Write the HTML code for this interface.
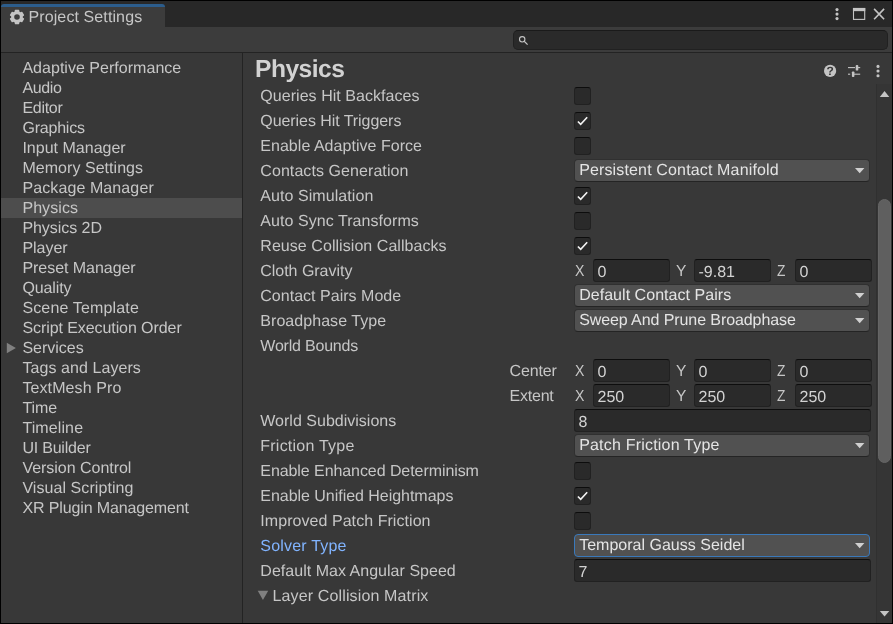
<!DOCTYPE html>
<html><head><meta charset="utf-8"><title>Project Settings</title>
<style>
html,body{margin:0;padding:0;background:#000;}
body{width:893px;height:624px;overflow:hidden;position:relative;font-family:"Liberation Sans",sans-serif;text-rendering:geometricPrecision;}
#win{position:absolute;left:1px;top:1px;width:891px;height:622px;background:#383838;overflow:hidden;}
#root{position:absolute;left:0;top:0;width:893px;height:624px;will-change:transform;}
#root>*{position:absolute;}
.tabbar{left:1px;top:1px;width:891px;height:26px;background:#282828;}
.tab{left:1px;top:4px;width:164px;height:23px;background:#3c3c3c;border-top:3px solid #2c5d8c;border-radius:3px 3px 0 0;box-sizing:border-box;}
.toolbar{left:1px;top:27px;width:891px;height:25px;background:#3c3c3c;}
.hline{left:1px;top:52px;width:891px;height:1px;background:#232323;}
.vline{left:242px;top:53px;width:1px;height:570px;background:#232323;}
.sel{left:1px;top:198px;width:241px;height:20px;background:#4d4d4d;}
.search{left:513px;top:30px;width:375px;height:20px;box-sizing:border-box;background:#2a2a2a;border:1px solid #212121;border-top-color:#1a1a1a;border-radius:5px;}
.t{font-size:16.0px;line-height:20px;height:20px;color:#c6c6c6;white-space:pre;}
.fv{color:#d2d2d2;}
.title{font-size:24.6px;font-weight:bold;line-height:20px;height:20px;color:#d2d2d2;white-space:pre;}
.blue{color:#81b4ff;}
.ddt{color:#e4e4e4;}

.cb{width:17px;height:18px;box-sizing:border-box;background:#2a2a2a;border:1px solid #212121;border-top-color:#0d0d0d;border-radius:3px;}
.dd{width:296px;height:23px;box-sizing:border-box;background:#515151;border:1px solid #303030;border-bottom-color:#242424;border-radius:4px;}
.dd.foc{border-color:#3a79bb;}
.tf{height:23px;box-sizing:border-box;background:#2a2a2a;border:1px solid #212121;border-top-color:#0d0d0d;border-radius:3px;}
.sbtrack{left:876px;top:84px;width:16px;height:539px;background:#353535;border-left:1px solid #303030;box-sizing:border-box;}
.sbthumb{left:878px;top:198.5px;width:13px;height:264.5px;background:#5f5f5f;border-radius:6.5px;box-sizing:border-box;border:1px solid #656565;}
</style></head><body>
<div id="win"></div>
<div id="root">
<div class="tabbar"></div>
<div class="tab"></div>
<div class="toolbar"></div>
<div class="hline"></div>
<div class="vline"></div>
<div class="sel"></div>
<div class="search"></div>
<div class="sbtrack"></div>
<div class="sbthumb"></div>
<svg style="left:878px;top:89px" width="14" height="10" viewBox="0 0 14 10"><path d="M1.8 8.1 L11.3 8.1 L6.55 2 Z" fill="#c4c4c4"/></svg>
<svg style="left:878px;top:609px" width="14" height="10" viewBox="0 0 14 10"><path d="M1.8 2 L11.3 2 L6.55 7.6 Z" fill="#c4c4c4"/></svg>
<svg style="left:4px;top:340px" width="16" height="16" viewBox="0 0 16 16"><path d="M2.8 2.8 L2.8 13.2 L11.9 8 Z" fill="#808080"/></svg>
<div class="cb" style="left:574px;top:87px"></div>
<div class="cb" style="left:574px;top:112px"></div>
<svg class="ck" style="left:574px;top:112px" width="18" height="18" viewBox="0 0 18 18"><path d="M3.9 9.5 L6.7 12.4 L13.2 5.3" fill="none" stroke="#f2f2f2" stroke-width="1.65"/></svg>
<div class="cb" style="left:574px;top:137px"></div>
<div class="dd" style="left:574px;top:159px"></div>
<svg style="left:853px;top:166px" width="14" height="10" viewBox="0 0 14 10"><path d="M2 2.1 L11.4 2.1 L6.7 7.3 Z" fill="#d0d0d0"/></svg>
<div class="cb" style="left:574px;top:187px"></div>
<svg class="ck" style="left:574px;top:187px" width="18" height="18" viewBox="0 0 18 18"><path d="M3.9 9.5 L6.7 12.4 L13.2 5.3" fill="none" stroke="#f2f2f2" stroke-width="1.65"/></svg>
<div class="cb" style="left:574px;top:212px"></div>
<div class="cb" style="left:574px;top:237px"></div>
<svg class="ck" style="left:574px;top:237px" width="18" height="18" viewBox="0 0 18 18"><path d="M3.9 9.5 L6.7 12.4 L13.2 5.3" fill="none" stroke="#f2f2f2" stroke-width="1.65"/></svg>
<div class="tf" style="left:593px;top:259px;width:77px"></div>
<div class="tf" style="left:694px;top:259px;width:77px"></div>
<div class="tf" style="left:795px;top:259px;width:77px"></div>
<div class="dd" style="left:574px;top:284px"></div>
<svg style="left:853px;top:291px" width="14" height="10" viewBox="0 0 14 10"><path d="M2 2.1 L11.4 2.1 L6.7 7.3 Z" fill="#d0d0d0"/></svg>
<div class="dd" style="left:574px;top:309px"></div>
<svg style="left:853px;top:316px" width="14" height="10" viewBox="0 0 14 10"><path d="M2 2.1 L11.4 2.1 L6.7 7.3 Z" fill="#d0d0d0"/></svg>
<div class="tf" style="left:593px;top:359px;width:77px"></div>
<div class="tf" style="left:694px;top:359px;width:77px"></div>
<div class="tf" style="left:795px;top:359px;width:77px"></div>
<div class="tf" style="left:593px;top:384px;width:77px"></div>
<div class="tf" style="left:694px;top:384px;width:77px"></div>
<div class="tf" style="left:795px;top:384px;width:77px"></div>
<div class="tf" style="left:574px;top:409px;width:297px"></div>
<div class="dd" style="left:574px;top:434px"></div>
<svg style="left:853px;top:441px" width="14" height="10" viewBox="0 0 14 10"><path d="M2 2.1 L11.4 2.1 L6.7 7.3 Z" fill="#d0d0d0"/></svg>
<div class="cb" style="left:574px;top:462px"></div>
<div class="cb" style="left:574px;top:487px"></div>
<svg class="ck" style="left:574px;top:487px" width="18" height="18" viewBox="0 0 18 18"><path d="M3.9 9.5 L6.7 12.4 L13.2 5.3" fill="none" stroke="#f2f2f2" stroke-width="1.65"/></svg>
<div class="cb" style="left:574px;top:512px"></div>
<div class="dd foc" style="left:574px;top:534px"></div>
<svg style="left:853px;top:541px" width="14" height="10" viewBox="0 0 14 10"><path d="M2 2.1 L11.4 2.1 L6.7 7.3 Z" fill="#d0d0d0"/></svg>
<div class="tf" style="left:574px;top:559px;width:297px"></div>
<svg style="left:255px;top:588px" width="16" height="16" viewBox="0 0 16 16"><path d="M2.7 2.8 L13.2 2.8 L7.95 11.9 Z" fill="#808080"/></svg>
<svg style="left:7.899999999999999px;top:8.0px" width="18" height="18" viewBox="-9 -9 18 18"><g fill="#c4c4c4"><rect x="-2.25" y="-7.15" width="4.5" height="2.75" rx="0.6" transform="rotate(0)"/><rect x="-2.25" y="-7.15" width="4.5" height="2.75" rx="0.6" transform="rotate(60)"/><rect x="-2.25" y="-7.15" width="4.5" height="2.75" rx="0.6" transform="rotate(120)"/><rect x="-2.25" y="-7.15" width="4.5" height="2.75" rx="0.6" transform="rotate(180)"/><rect x="-2.25" y="-7.15" width="4.5" height="2.75" rx="0.6" transform="rotate(240)"/><rect x="-2.25" y="-7.15" width="4.5" height="2.75" rx="0.6" transform="rotate(300)"/><path fill-rule="evenodd" d="M-5.9 0 A5.9 5.9 0 1 0 5.9 0 A5.9 5.9 0 1 0 -5.9 0 Z M-2.8 0 A2.8 2.8 0 1 1 2.8 0 A2.8 2.8 0 1 1 -2.8 0 Z"/></g></svg>
<svg style="left:830px;top:5px" width="14" height="18" viewBox="0 0 14 18"><g fill="#c4c4c4"><circle cx="7" cy="4.6" r="1.55"/><circle cx="7" cy="9.1" r="1.55"/><circle cx="7" cy="13.6" r="1.55"/></g></svg>
<svg style="left:852px;top:7px" width="14" height="14" viewBox="0 0 14 14"><rect x="1.5" y="1.5" width="11.2" height="10.9" fill="none" stroke="#c4c4c4" stroke-width="1.1"/><rect x="0.95" y="0.95" width="12.3" height="3.2" fill="#c4c4c4"/></svg>
<svg style="left:872px;top:7px" width="14" height="14" viewBox="0 0 14 14"><path d="M2.1 1.9 L12.1 12.3 M12.1 1.9 L2.1 12.3" stroke="#c4c4c4" stroke-width="1.6" fill="none"/></svg>
<svg style="left:516px;top:33px" width="14" height="14" viewBox="0 0 14 14"><circle cx="6.2" cy="6.3" r="2.7" fill="none" stroke="#c4c4c4" stroke-width="1.1"/><path d="M8.2 8.3 L11.6 11.6" stroke="#c4c4c4" stroke-width="1.2" fill="none"/></svg>
<svg style="left:823px;top:64px" width="14" height="14" viewBox="0 0 14 14"><circle cx="7.1" cy="6.9" r="6.1" fill="#c4c4c4"/><text x="7.1" y="11.2" font-family="Liberation Sans" font-weight="bold" font-size="12" text-anchor="middle" fill="#383838">?</text></svg>
<svg style="left:847px;top:64px" width="14" height="14" viewBox="0 0 14 14"><g fill="#c4c4c4"><rect x="1" y="3.05" width="7" height="1.1"/><rect x="8.7" y="1" width="2.6" height="5.6" rx="0.9"/><rect x="11" y="3.05" width="2.2" height="1.1"/><rect x="1" y="9.65" width="2.2" height="1.1"/><rect x="4.9" y="7.5" width="2.5" height="5.5" rx="0.8"/><rect x="7" y="9.65" width="6.2" height="1.1"/></g></svg>
<svg style="left:871px;top:62px" width="14" height="18" viewBox="0 0 14 18"><g fill="#c4c4c4"><circle cx="7" cy="4.4" r="1.55"/><circle cx="7" cy="9.05" r="1.55"/><circle cx="7" cy="13.7" r="1.55"/></g></svg>
<span id="x0" class="t" style="left:22.40px;top:59px;letter-spacing:0.030px;">Adaptive Performance</span>
<span id="x1" class="t" style="left:22.40px;top:79px;letter-spacing:-0.336px;">Audio</span>
<span id="x2" class="t" style="left:22.40px;top:99px;letter-spacing:-0.284px;">Editor</span>
<span id="x3" class="t" style="left:22.40px;top:119px;letter-spacing:-0.205px;">Graphics</span>
<span id="x4" class="t" style="left:22.40px;top:139px;letter-spacing:0.010px;">Input Manager</span>
<span id="x5" class="t" style="left:22.40px;top:159px;letter-spacing:0.044px;">Memory Settings</span>
<span id="x6" class="t" style="left:22.40px;top:179px;letter-spacing:0.104px;">Package Manager</span>
<span id="x7" class="t" style="left:22.40px;top:199px;letter-spacing:0.078px;">Physics</span>
<span id="x8" class="t" style="left:22.40px;top:219px;letter-spacing:-0.051px;">Physics 2D</span>
<span id="x9" class="t" style="left:22.40px;top:239px;letter-spacing:-0.010px;">Player</span>
<span id="x10" class="t" style="left:22.40px;top:259px;letter-spacing:-0.041px;">Preset Manager</span>
<span id="x11" class="t" style="left:22.40px;top:279px;letter-spacing:-0.121px;">Quality</span>
<span id="x12" class="t" style="left:22.40px;top:299px;letter-spacing:0.153px;">Scene Template</span>
<span id="x13" class="t" style="left:22.40px;top:319px;letter-spacing:-0.078px;">Script Execution Order</span>
<span id="x14" class="t" style="left:22.40px;top:339px;letter-spacing:0.000px;">Services</span>
<span id="x15" class="t" style="left:22.40px;top:359px;letter-spacing:0.074px;">Tags and Layers</span>
<span id="x16" class="t" style="left:22.40px;top:379px;letter-spacing:0.107px;">TextMesh Pro</span>
<span id="x17" class="t" style="left:22.40px;top:399px;letter-spacing:-0.029px;">Time</span>
<span id="x18" class="t" style="left:22.40px;top:419px;letter-spacing:0.110px;">Timeline</span>
<span id="x19" class="t" style="left:22.40px;top:439px;letter-spacing:-0.215px;">UI Builder</span>
<span id="x20" class="t" style="left:22.40px;top:459px;letter-spacing:-0.027px;">Version Control</span>
<span id="x21" class="t" style="left:22.40px;top:479px;letter-spacing:0.070px;">Visual Scripting</span>
<span id="x22" class="t" style="left:22.40px;top:499px;letter-spacing:-0.125px;">XR Plugin Management</span>
<span id="x23" class="t" style="left:260.30px;top:87px;letter-spacing:0.046px;">Queries Hit Backfaces</span>
<span id="x24" class="t" style="left:260.30px;top:112px;letter-spacing:-0.062px;">Queries Hit Triggers</span>
<span id="x25" class="t" style="left:260.30px;top:137px;letter-spacing:0.034px;">Enable Adaptive Force</span>
<span id="x26" class="t" style="left:260.30px;top:162px;letter-spacing:0.075px;">Contacts Generation</span>
<span id="x27" class="t ddt" style="left:579.14px;top:161px;letter-spacing:0.148px;">Persistent Contact Manifold</span>
<span id="x28" class="t" style="left:260.30px;top:187px;letter-spacing:0.068px;">Auto Simulation</span>
<span id="x29" class="t" style="left:260.30px;top:212px;letter-spacing:0.058px;">Auto Sync Transforms</span>
<span id="x30" class="t" style="left:260.30px;top:237px;letter-spacing:0.055px;">Reuse Collision Callbacks</span>
<span id="x31" class="t" style="left:260.30px;top:262px;letter-spacing:-0.032px;">Cloth Gravity</span>
<span id="x32" class="t" style="left:575.10px;top:262px;display:inline-block;transform:scaleX(0.88);transform-origin:0 50%;">X</span>
<span id="x33" class="t fv" style="left:597.50px;top:263px;">0</span>
<span id="x34" class="t" style="left:675.70px;top:262px;display:inline-block;transform:scaleX(0.97);transform-origin:0 50%;">Y</span>
<span id="x35" class="t fv" style="left:698.50px;top:263px;">-9.81</span>
<span id="x36" class="t" style="left:777.30px;top:262px;display:inline-block;transform:scaleX(0.86);transform-origin:0 50%;">Z</span>
<span id="x37" class="t fv" style="left:799.50px;top:263px;">0</span>
<span id="x38" class="t" style="left:260.30px;top:287px;letter-spacing:0.019px;">Contact Pairs Mode</span>
<span id="x39" class="t ddt" style="left:579.14px;top:286px;letter-spacing:0.042px;">Default Contact Pairs</span>
<span id="x40" class="t" style="left:260.30px;top:312px;letter-spacing:0.050px;">Broadphase Type</span>
<span id="x41" class="t ddt" style="left:579.14px;top:311px;letter-spacing:-0.084px;">Sweep And Prune Broadphase</span>
<span id="x42" class="t" style="left:260.30px;top:337px;letter-spacing:-0.205px;">World Bounds</span>
<span id="x43" class="t" style="left:509.57px;top:362px;letter-spacing:-0.150px;">Center</span>
<span id="x44" class="t" style="left:575.10px;top:362px;display:inline-block;transform:scaleX(0.88);transform-origin:0 50%;">X</span>
<span id="x45" class="t fv" style="left:597.50px;top:363px;">0</span>
<span id="x46" class="t" style="left:675.70px;top:362px;display:inline-block;transform:scaleX(0.97);transform-origin:0 50%;">Y</span>
<span id="x47" class="t fv" style="left:698.50px;top:363px;">0</span>
<span id="x48" class="t" style="left:777.30px;top:362px;display:inline-block;transform:scaleX(0.86);transform-origin:0 50%;">Z</span>
<span id="x49" class="t fv" style="left:799.50px;top:363px;">0</span>
<span id="x50" class="t" style="left:509.57px;top:387px;letter-spacing:-0.234px;">Extent</span>
<span id="x51" class="t" style="left:575.10px;top:387px;display:inline-block;transform:scaleX(0.88);transform-origin:0 50%;">X</span>
<span id="x52" class="t fv" style="left:597.50px;top:388px;">250</span>
<span id="x53" class="t" style="left:675.70px;top:387px;display:inline-block;transform:scaleX(0.97);transform-origin:0 50%;">Y</span>
<span id="x54" class="t fv" style="left:698.50px;top:388px;">250</span>
<span id="x55" class="t" style="left:777.30px;top:387px;display:inline-block;transform:scaleX(0.86);transform-origin:0 50%;">Z</span>
<span id="x56" class="t fv" style="left:799.50px;top:388px;">250</span>
<span id="x57" class="t" style="left:260.30px;top:412px;letter-spacing:0.011px;">World Subdivisions</span>
<span id="x58" class="t fv" style="left:578.50px;top:413px;">8</span>
<span id="x59" class="t" style="left:260.30px;top:437px;letter-spacing:0.226px;">Friction Type</span>
<span id="x60" class="t ddt" style="left:579.14px;top:436px;letter-spacing:0.201px;">Patch Friction Type</span>
<span id="x61" class="t" style="left:260.30px;top:462px;letter-spacing:-0.074px;">Enable Enhanced Determinism</span>
<span id="x62" class="t" style="left:260.30px;top:487px;letter-spacing:-0.033px;">Enable Unified Heightmaps</span>
<span id="x63" class="t" style="left:260.30px;top:512px;letter-spacing:0.056px;">Improved Patch Friction</span>
<span id="x64" class="t blue" style="left:260.30px;top:537px;letter-spacing:0.190px;">Solver Type</span>
<span id="x65" class="t ddt" style="left:579.14px;top:536px;letter-spacing:0.011px;">Temporal Gauss Seidel</span>
<span id="x66" class="t" style="left:260.30px;top:562px;letter-spacing:0.028px;">Default Max Angular Speed</span>
<span id="x67" class="t fv" style="left:578.50px;top:563px;">7</span>
<span id="x68" class="t" style="left:272.50px;top:587px;letter-spacing:0.139px;">Layer Collision Matrix</span>
<span id="x69" class="title" style="left:255.00px;top:59.5px;letter-spacing:-0.502px;">Physics</span>
<span id="x70" class="t tabt" style="left:28.50px;top:8px;letter-spacing:0.105px;">Project Settings</span>
</div>
</body></html>
